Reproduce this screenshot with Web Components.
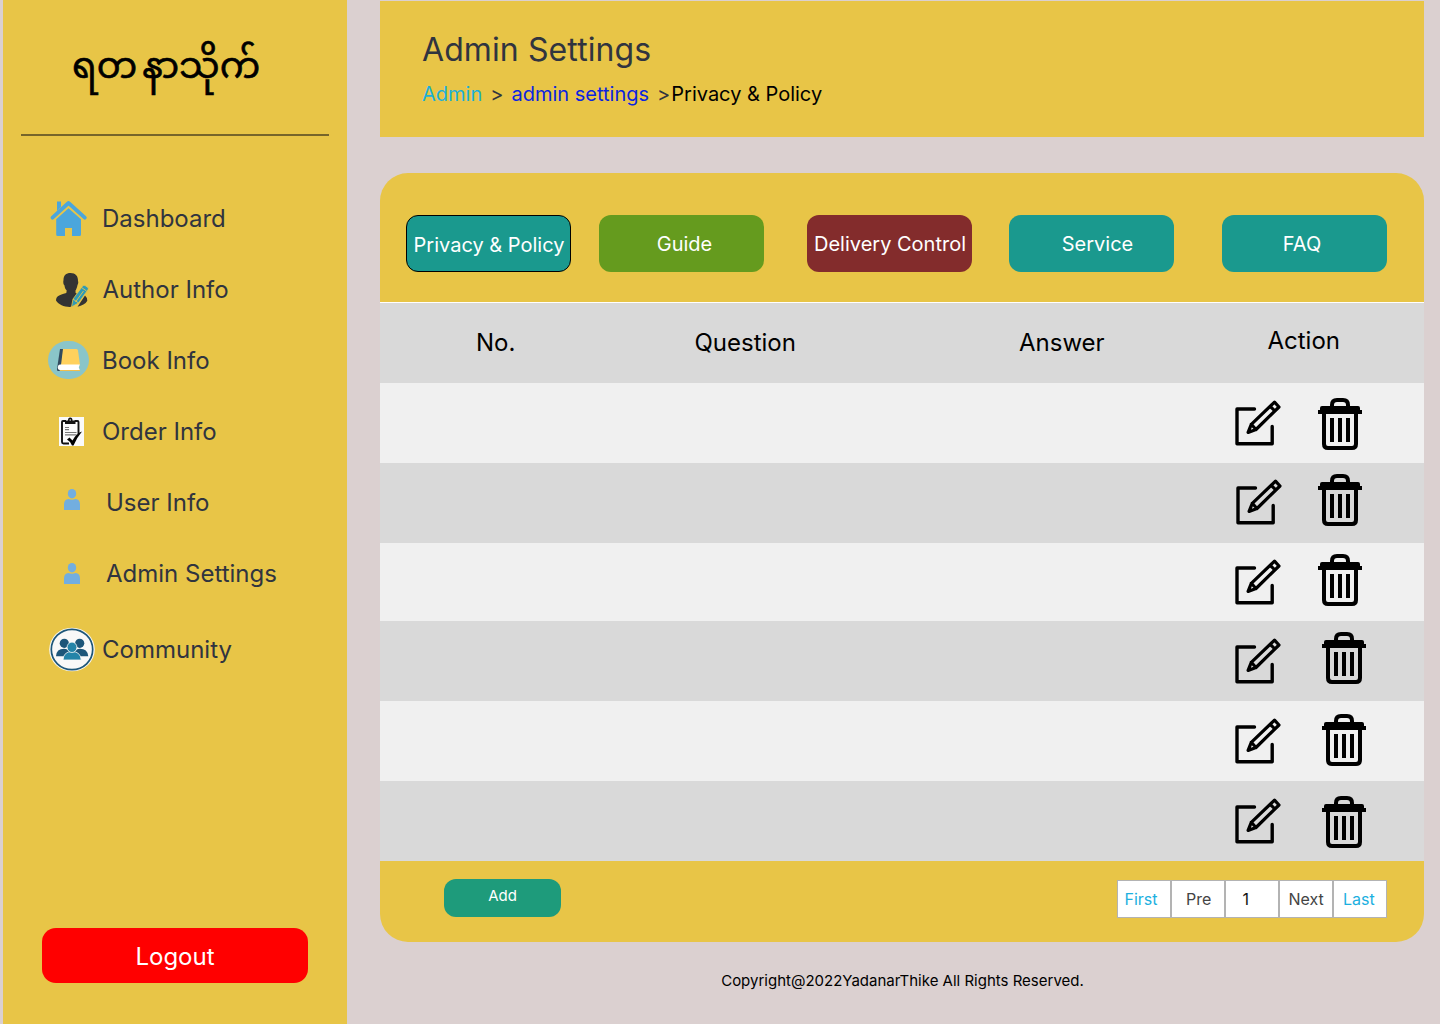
<!DOCTYPE html>
<html lang="en">
<head>
<meta charset="utf-8">
<title>Admin Settings</title>
<style>
  html, body { margin: 0; height: 1024px; overflow: hidden; }
  body { background: #dbd0d0; font-family: Inter, "Liberation Sans", sans-serif; color: #30343f; }
</style>
</head>
<body>
<admin-app></admin-app>
<script>
const define = (name, html, setup) => customElements.define(name, class extends HTMLElement {
  constructor() {
    super();
    const t = document.createElement('template');
    t.innerHTML = html;
    this.attachShadow({ mode: 'open' }).appendChild(t.content.cloneNode(true));
  }
  connectedCallback() { if (setup) setup(this, this.shadowRoot); }
});

/* Sidebar icons, drawn in page coordinates; the viewBox picks the row. */
const NAV_ICONS = {
  home: `<path fill="#4ba6dc" d="M57 201.600h4v5.400l-4 4zM56.200 219.300L68.500 208.200L81 219.300V234.500Q81 236 79.500 236H72V228H65V236H57.700Q56.200 236 56.200 234.500z"/>
    <path fill="none" stroke="#4ba6dc" stroke-width="3.800" stroke-linecap="round" stroke-linejoin="round" d="M52.500 217.700L68.500 203L84.800 217.700"/>`,
  author: `<path fill="#333" d="M63.500 280C63.500 275.500 66 273 70.500 273C75.500 273 78.200 276 78 281C78.500 282 78.300 284 77.500 285C77 288 76 289.500 75.500 290.500L75.600 293L80 295L72 306.800C65 307.500 59 305 56 300.500C56.300 296 58.500 295.300 66.300 293L66.700 290.500C65.500 289.500 64.700 287.500 64.500 285.500C63.300 284.500 63 282 63.500 280zM85 295.500Q87 297 87.300 300.800C85.500 304 82 305.800 77.500 306.700z"/>
    <path fill="#2f9bb5" stroke="#e8c547" stroke-width=".8" d="M71.500 307L73 299L83 285.500Q84 284.800 85.500 285.800L87.800 287.500Q88.800 288.500 88 289.700L78.500 303z"/>
    <path stroke="#e8c547" stroke-width=".9" fill="none" d="M81.500 287.500L86.500 291M83.500 291L75.500 302M73 299L78.500 303"/>`,
  book: `<rect x="48" y="341" width="41" height="38" rx="19.500" ry="19" fill="#8ac5c9"/>
    <path fill="#324a5e" d="M60 349H63.500L61.500 366L59.500 371H58Q56.700 371 57 369z"/>
    <path fill="#ffd15d" d="M63 349H76.500Q77.700 349 78 350.500L80 365H61z"/>
    <path fill="#fff" d="M59.800 364.600H79.800L78.800 367.500L79.800 370H60Q57.600 369.800 57.800 367Q58 364.700 59.800 364.600z"/><path fill="#f2bf4a" d="M60 370H80V371H60z"/>`,
  order: `<path fill="#fafafa" d="M59 417H84V446H59z"/>
    <path fill="none" stroke="#111" stroke-width="1.900" d="M66 421H63Q62 421 62 422V442Q62 443.500 63.500 443.500H69M74.500 421H77.500Q78.500 421 78.500 422V434"/>
    <path fill="#111" d="M65 424V421.500Q65 420.500 67 420.500H68Q68 417.500 70.200 417.500Q72.500 417.500 72.500 420.500H74Q75.500 420.500 75.500 421.500V424z"/><circle cx="70.200" cy="420" r=".7" fill="#fff"/>
    <path stroke="#777" stroke-width="1.200" d="M65 427.500h4M65 429.700h4M65 432.500h11.500M65 434.800h11.500"/>
    <path fill="#000" d="M67 439.500L69.500 437.500L72.500 440.500Q76 433.500 82 431.500Q76.500 438 73.500 445.500H72Q70 441 67 439.500z"/>`,
  user: `<g fill="#72aee0"><ellipse cx="72" cy="493.700" rx="4.200" ry="4.800"/><path d="M64 510V504.500Q64 499.400 68.500 499Q72 500.300 75.500 499Q80 499.400 80 504.500V510z"/></g>`,
  admin: `<g fill="#72aee0" transform="translate(0 74)"><ellipse cx="72" cy="493.700" rx="4.200" ry="4.800"/><path d="M64 510V504.500Q64 499.400 68.500 499Q72 500.300 75.500 499Q80 499.400 80 504.500V510z"/></g>`,
  community: `<ellipse cx="72" cy="649.500" rx="22.800" ry="21.800" fill="#f8f7f2"/>
    <ellipse cx="72" cy="649.500" rx="20.700" ry="20.200" fill="#f8f8f8" stroke="#1d5679" stroke-width="1.700"/>
    <g fill="#1d5679"><circle cx="64.300" cy="643.300" r="4.600"/><circle cx="79.700" cy="643.300" r="4.600"/><path d="M56 656.200Q56.500 648.800 64 648.800Q70 649 71 656.200zM73 656.200Q74 649 80 648.800Q87.500 648.800 88.300 656.200z"/></g>
    <g fill="#2484a8" stroke="#f8f8f8" stroke-width=".8"><path d="M63 660Q63.500 651.500 72 651.500Q80.500 651.500 81.300 660z"/><ellipse cx="72" cy="647.300" rx="4.900" ry="5.200"/></g>`
};

define('brand-logo', `<style>
  :host { display: flex; justify-content: center; box-sizing: border-box; height: 134px; padding: 40px 18px 0 0; color: #000;
    font: 36px/60px "Noto Sans Myanmar", "Padauk", "Noto Sans", sans-serif; white-space: nowrap; -webkit-text-stroke: .6px #000; }
  .tail { padding-left: 5px; }
</style><span lang="my">ရတ<span class="tail">နာသိုက်</span></span>`);

define('nav-item', `<style>
  :host { display: flex; align-items: center; height: 71px; font-size: 24px; line-height: 30px; white-space: nowrap; }
  svg { display: block; flex: none; }
</style><svg width="55" height="71"></svg><span><slot></slot></span>`, (el, root) => {
  const svg = root.querySelector('svg');
  svg.setAttribute('viewBox', `47 ${el.getAttribute('top')} 55 71`);
  svg.innerHTML = NAV_ICONS[el.getAttribute('icon')];
  root.querySelector('span').style.paddingLeft = (el.getAttribute('gap') || 0) + 'px';
});

define('side-bar', `<style>
  :host { display: flex; flex-direction: column; box-sizing: border-box; width: 344px; height: 1024px; margin-left: 3px; background: #e8c547; flex: none; }
  hr { width: 308px; height: 2px; margin: 0 0 0 18px; border: 0; background: #76652a; }
  nav { padding: 47px 0 0 44px; flex: 1; }
  .last { margin-top: 5px; }
  button { width: 266px; height: 55px; margin: 0 0 41px 39px; padding: 2px 0 0; border: 0; border-radius: 14px; background: #f00; color: #fff; font: 24px/30px Inter, sans-serif; }
</style>
<brand-logo></brand-logo><hr>
<nav>
  <nav-item icon="home" top="183">Dashboard</nav-item>
  <nav-item icon="author" top="254" gap="0.500">Author Info</nav-item>
  <nav-item icon="book" top="325">Book Info</nav-item>
  <nav-item icon="order" top="396">Order Info</nav-item>
  <nav-item icon="user" top="467" gap="4">User Info</nav-item>
  <nav-item icon="admin" top="538" gap="4">Admin Settings</nav-item>
  <nav-item class="last" icon="community" top="614">Community</nav-item>
</nav>
<button>Logout</button>`);

define('page-header', `<style>
  :host { display: block; box-sizing: border-box; height: 136px; margin-top: 1px; padding: 29px 0 0 42px; background: #e8c547; white-space: nowrap; }
  h1 { margin: 0; font-weight: 400; font-size: 32px; line-height: 40px; letter-spacing: .1px; }
  div { display: flex; margin-top: 11px; font-size: 20px; line-height: 26px; }
  .a { color: #1cb0d8; } .b { color: #0b24e0; } .c { color: #000; }
  .s1 { padding: 0 8px; } .s2 { padding: 0 1px 0 8px; }
</style><h1>Admin Settings</h1>
<div><span class="a">Admin</span><span class="s1">&gt;</span><span class="b">admin settings</span><span class="s2">&gt;</span><span class="c">Privacy &amp; Policy</span></div>`);

define('tab-button', `<style>
  :host { display: flex; justify-content: center; align-items: center; box-sizing: border-box; width: 165px; height: 57px; border-radius: 12px; color: #fff; background: #1a998e; font-size: 20px; line-height: 24px; white-space: nowrap; flex: none; }
  :host([active]) { border: 1px solid #000; padding: 2px 0 0 1px; }
</style><slot></slot>`);

define('tab-strip', `<style>
  :host { display: flex; box-sizing: border-box; height: 129px; padding: 42px 0 0 26px; }
  .g { background: #659b1e; margin-left: 28px; padding-left: 6px; } .d { background: #832c2c; margin-left: 43px; padding-left: 1px; }
  .s { margin-left: 37px; padding-left: 12px; } .f { margin-left: 48px; padding-right: 5px; }
</style>
<tab-button active>Privacy &amp; Policy</tab-button><tab-button class="g">Guide</tab-button><tab-button class="d">Delivery Control</tab-button><tab-button class="s">Service</tab-button><tab-button class="f">FAQ</tab-button>`);

define('table-head', `<style>
  :host { display: grid; grid-template-columns: 96px 218.500px 324.500px 248.500px 1fr; align-items: center; box-sizing: border-box; height: 81px; border-top: 1px solid #fff; background: #d9d9d9; color: #000; font-size: 24px; line-height: 30px; white-space: nowrap; }
  .act { padding-bottom: 4px; }
</style><i></i><span>No.</span><span>Question</span><span>Answer</span><span class="act">Action</span>`);

define('table-row', `<style>
  :host { display: flex; justify-content: flex-end; height: 80px; background: #f0f0f0; overflow: hidden; }
  :host([shade]) { background: #d9d9d9; }
  :host([short]) { height: 78px; }
  svg { display: block; margin-right: 44px; flex: none; }
</style>
<svg width="160" height="80" viewBox="1220 383 160 80">
  <g class="edit" fill="none" stroke="#000" stroke-width="3.400" stroke-linecap="round" stroke-linejoin="round">
    <path d="M1254.500 409H1237V443.700H1272.200V426.500"/>
    <path stroke-width="3.200" d="M1248.100 432.400L1251.300 424.300L1274.500 402.200L1279 407L1256 429.500zM1270.300 406.300L1274.800 411M1251.300 424.300L1256 429.500"/>
  </g>
  <g class="bin">
    <path d="M1318 410H1320V408Q1320 406 1322 406H1358Q1360 406 1360 408V410H1362V414H1318z"/>
    <path fill="none" stroke="#000" stroke-width="4" d="M1332 407V405Q1332 400 1337 400H1343Q1348 400 1348 405V407M1324 412V444Q1324 448 1328 448H1352Q1356 448 1356 444V412M1332 418V442M1340 418V442M1348 418V442"/>
  </g>
</svg>`, (el, root) => {
  root.querySelector('.edit').setAttribute('transform', `translate(${el.getAttribute('edit')})`);
  root.querySelector('.bin').setAttribute('transform', `translate(${el.getAttribute('bin')})`);
});

define('page-cell', `<style>
  :host { display: block; box-sizing: border-box; width: 54px; height: 38px; border: 1px solid #b3b3b3; background: #fff; color: #444; font-size: 16px; line-height: 37px; white-space: nowrap; }
</style><slot></slot>`);

define('table-footer', `<style>
  :host { display: flex; justify-content: space-between; box-sizing: border-box; height: 81px; padding: 18px 37px 0 64px; }
  button { width: 117px; height: 38px; padding: 0 0 4px; border: 0; border-radius: 12px; background: #1e9b7b; color: #fff; font: 15px/20px Inter, sans-serif; }
  div { display: flex; margin-top: 1px; }
  .l { color: #1cb0e0; }
</style><button>Add</button>
<div><page-cell class="l" style="padding-left:6.500px">First</page-cell><page-cell style="padding-left:14px">Pre</page-cell><page-cell style="padding-left:16.500px;color:#111">1</page-cell><page-cell style="padding-left:8.500px">Next</page-cell><page-cell class="l" style="padding-left:9px">Last</page-cell></div>`);

define('data-card', `<style>
  :host { display: block; margin-top: 36px; height: 769px; border-radius: 28px; background: #e8c547; overflow: hidden; }
</style>
<tab-strip></tab-strip><table-head></table-head>
<table-row edit="0 0" bin="0 0"></table-row>
<table-row shade edit="1 -1" bin="0 -4"></table-row>
<table-row short edit="0 -1" bin="0 -4"></table-row>
<table-row shade edit="0 0" bin="4 -4"></table-row>
<table-row edit="0 0" bin="4 -2"></table-row>
<table-row shade edit="0 0" bin="4 0"></table-row>
<table-footer></table-footer>`);

define('admin-app', `<style>
  :host { display: flex; width: 1440px; height: 1024px; }
  main { width: 1044px; margin-left: 33px; display: flex; flex-direction: column; }
  footer { margin-top: 29px; padding-left: 1px; text-align: center; font-size: 15px; line-height: 20px; color: #000; }
</style>
<side-bar></side-bar>
<main><page-header></page-header><data-card></data-card><footer>Copyright@2022YadanarThike All Rights Reserved.</footer></main>`);
</script>
</body>
</html>
